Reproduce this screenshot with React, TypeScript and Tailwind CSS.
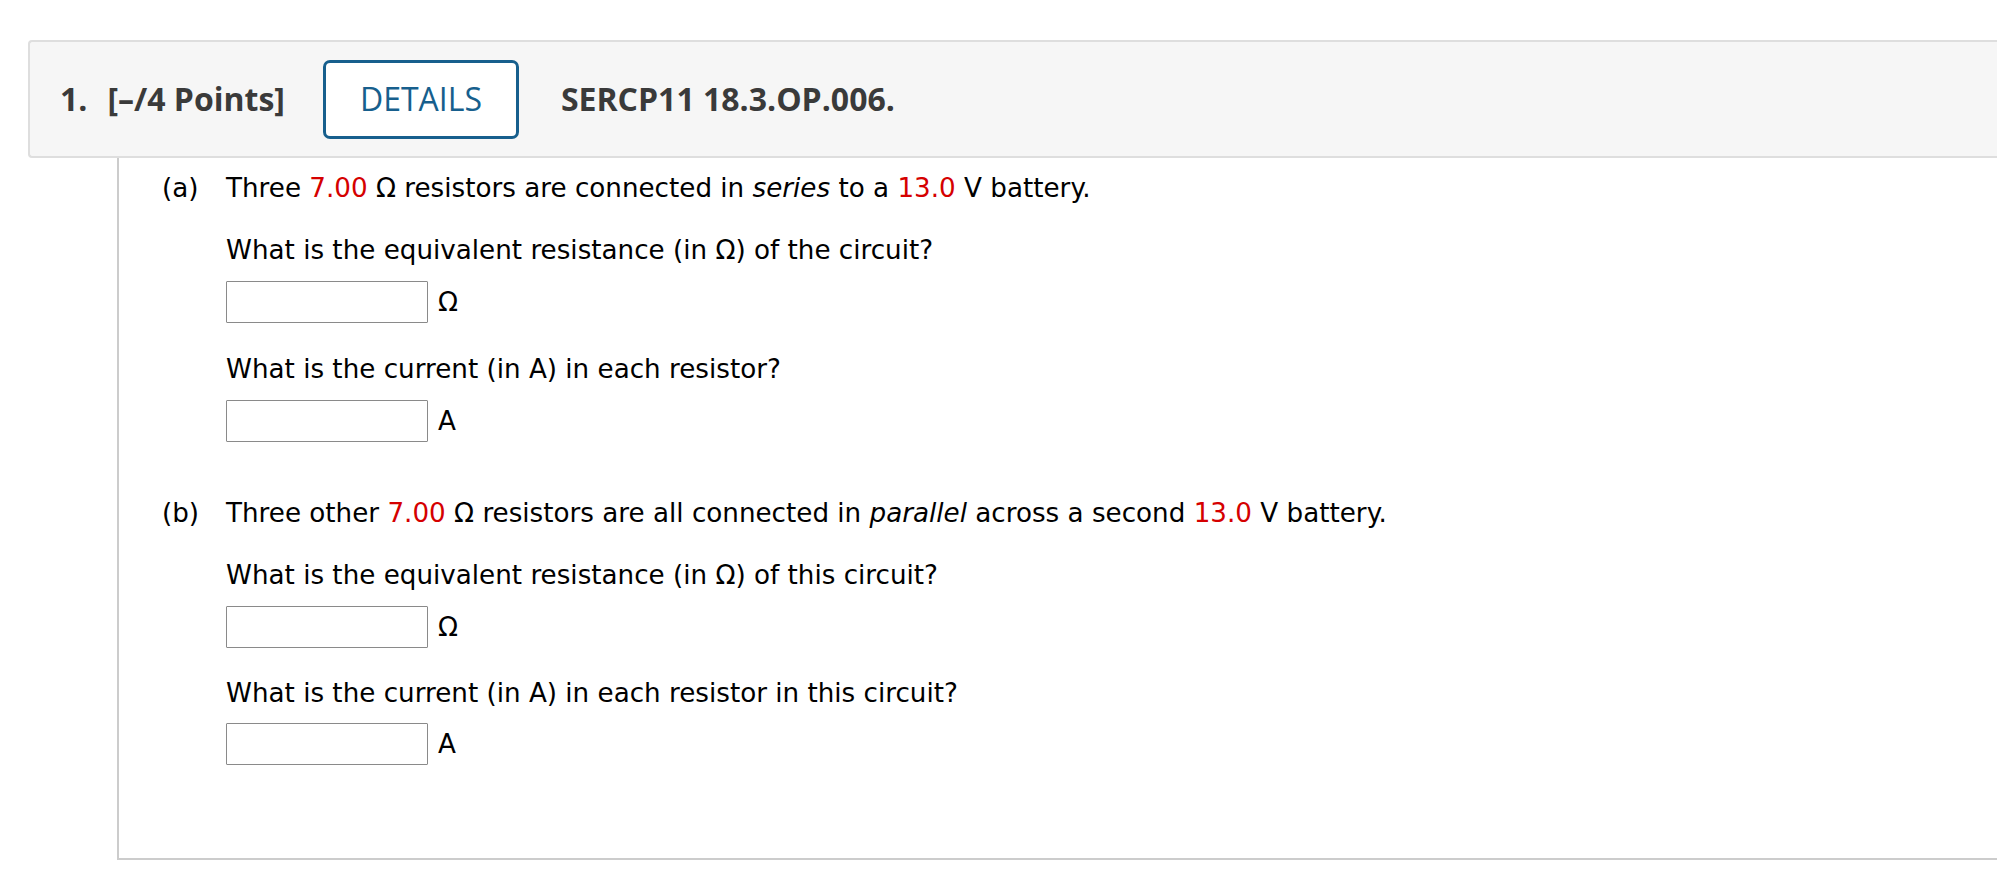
export default function App() {
  const body = "font-['DejaVu_Sans',Verdana,sans-serif] text-[26.2px] text-black";
  const red = "text-[#d50000]";

  const Answer = ({ unit }: { unit: string }) => (
    <div className="flex items-center h-[42px]">
      <input
        type="text"
        className="w-[202px] h-[42px] border border-[#8a8a8a] bg-white rounded-[1px] outline-none"
      />
      <span className="ml-[10px] leading-[30px]">{unit}</span>
    </div>
  );

  return (
    <div className="w-full min-h-[872px] bg-white overflow-hidden pt-[40px]">
      {/* header bar */}
      <div className="ml-[28px] h-[118px] flex items-center bg-[#f6f6f6] border-y-2 border-l-2 border-[#dedede] rounded-l-[4px] font-['Open_Sans',sans-serif] text-[32px] text-[#3a3a3a] whitespace-nowrap">
        <span className="ml-[30px] font-bold">1.</span>
        <span className="ml-[20px] font-bold">[–/4 Points]</span>
        <button className="ml-[38px] w-[196px] h-[79px] border-[3px] border-[#175f8d] rounded-[7px] text-[#175f8d] bg-white">
          DETAILS
        </button>
        <span className="ml-[42px] font-bold">SERCP11 18.3.OP.006.</span>
      </div>

      {/* question body */}
      <div className="ml-[117px] h-[702px] border-l-2 border-b-2 border-[#cccccc] pt-[15px]">
        <div className={body}>
          <div className="flex leading-[30px] h-[30px]">
            <span className="ml-[43px] w-[64px]">(a)</span>
            <span>
              Three <span className={red}>7.00</span> Ω resistors are connected in <i>series</i> to a{" "}
              <span className={red}>13.0</span> V battery.
            </span>
          </div>
          <div className="ml-[107px]">
            <div className="mt-[32px] leading-[30px] h-[30px]">What is the equivalent resistance (in Ω) of the circuit?</div>
            <div className="mt-[16px]">
              <Answer unit="Ω" />
            </div>
            <div className="mt-[31px] leading-[30px] h-[30px]">What is the current (in A) in each resistor?</div>
            <div className="mt-[16px]">
              <Answer unit="A" />
            </div>
          </div>

          <div className="flex leading-[30px] h-[30px] mt-[56px]">
            <span className="ml-[43px] w-[64px]">(b)</span>
            <span>
              Three other <span className={red}>7.00</span> Ω resistors are all connected in <i>parallel</i> across a second{" "}
              <span className={red}>13.0</span> V battery.
            </span>
          </div>
          <div className="ml-[107px]">
            <div className="mt-[32px] leading-[30px] h-[30px]">What is the equivalent resistance (in Ω) of this circuit?</div>
            <div className="mt-[16px]">
              <Answer unit="Ω" />
            </div>
            <div className="mt-[30px] leading-[30px] h-[30px]">What is the current (in A) in each resistor in this circuit?</div>
            <div className="mt-[15px]">
              <Answer unit="A" />
            </div>
          </div>
        </div>
      </div>
    </div>
  );
}
